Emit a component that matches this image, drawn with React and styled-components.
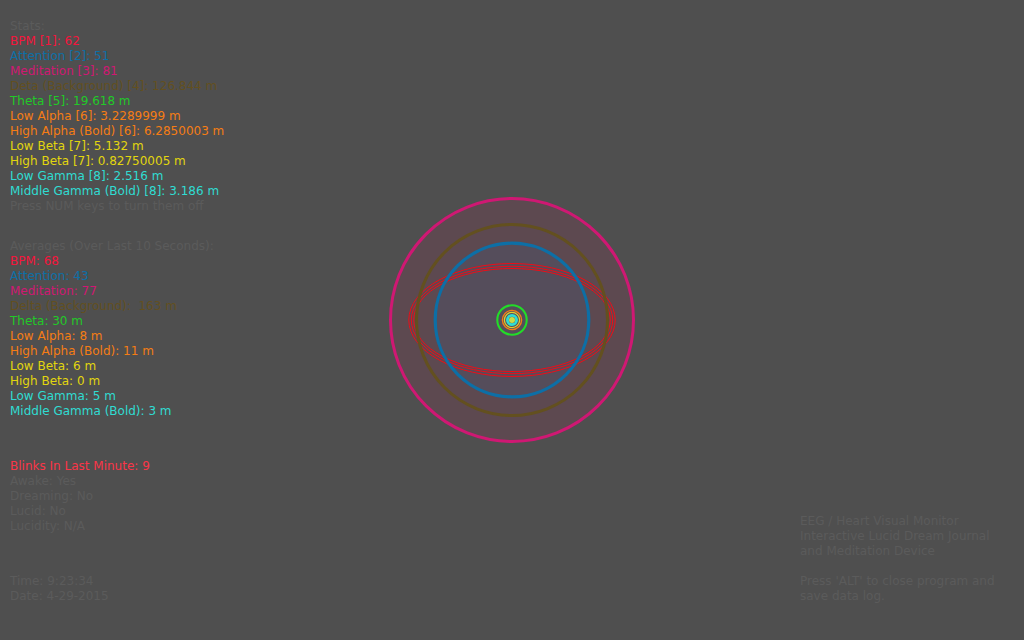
import React from "react";
import styled, { createGlobalStyle } from "styled-components";

const GlobalStyle = createGlobalStyle`
  body {
    margin: 0;
    background: #4f4f4f;
    font-family: "DejaVu Sans", Verdana, sans-serif;
    font-size: 12px;
    line-height: 15px;
  }
`;

const colors = {
  muted: "#5b5b5b",
  bpm: "#f4153c",
  attention: "#0d6fa6",
  meditation: "#cf1873",
  delta: "#63501f",
  theta: "#22c928",
  alpha: "#f57d14",
  beta: "#e2d60e",
  gamma: "#2fdcd2",
  blinks: "#fb3548",
};

const Screen = styled.main`
  display: grid;
  grid-template-columns: minmax(0, 1fr) 246px minmax(0, 1fr);
  min-height: 100vh;
  box-sizing: border-box;
  padding: 19px 10px 36px;
`;

const Readings = styled.div`
  display: flex;
  flex-direction: column;
`;

const Group = styled.section`
  margin-bottom: ${(p) => p.$gap || 0}px;
`;

const Line = styled.p`
  margin: 0;
  white-space: pre;
  color: ${(p) => colors[p.$tone || "muted"]};
`;

const Heading = styled.h2`
  margin: 0;
  font-size: inherit;
  font-weight: normal;
  color: ${colors.muted};
`;

const Rings = styled.svg`
  align-self: center;
  width: 100%;
  height: auto;
  margin-top: 17px;
`;

const About = styled.footer`
  align-self: end;
  justify-self: end;
  width: 214px;
  display: grid;
  gap: 15px;
  color: ${colors.muted};
`;

const Paragraph = styled.p`
  margin: 0;
  white-space: pre;
`;

const stats = [
  ["bpm", "BPM [1]: 62"],
  ["attention", "Attention [2]: 51"],
  ["meditation", "Meditation [3]: 81"],
  ["delta", "Deta (Background) [4]: 126.844 m"],
  ["theta", "Theta [5]: 19.618 m"],
  ["alpha", "Low Alpha [6]: 3.2289999 m"],
  ["alpha", "High Alpha (Bold) [6]: 6.2850003 m"],
  ["beta", "Low Beta [7]: 5.132 m"],
  ["beta", "High Beta [7]: 0.82750005 m"],
  ["gamma", "Low Gamma [8]: 2.516 m"],
  ["gamma", "Middle Gamma (Bold) [8]: 3.186 m"],
  ["muted", "Press NUM keys to turn them off"],
];

const averages = [
  ["bpm", "BPM: 68"],
  ["attention", "Attention: 43"],
  ["meditation", "Meditation: 77"],
  ["delta", "Delta (Background):  163 m"],
  ["theta", "Theta: 30 m"],
  ["alpha", "Low Alpha: 8 m"],
  ["alpha", "High Alpha (Bold): 11 m"],
  ["beta", "Low Beta: 6 m"],
  ["beta", "High Beta: 0 m"],
  ["gamma", "Low Gamma: 5 m"],
  ["gamma", "Middle Gamma (Bold): 3 m"],
];

const sleep = [
  ["blinks", "Blinks In Last Minute: 9"],
  ["muted", "Awake: Yes"],
  ["muted", "Dreaming: No"],
  ["muted", "Lucid: No"],
  ["muted", "Lucidity: N/A"],
];

const clock = [
  ["muted", "Time: 9:23:34"],
  ["muted", "Date: 4-29-2015"],
];

function Lines({ title, items, gap }) {
  return (
    <Group $gap={gap}>
      {title && <Heading>{title}</Heading>}
      {items.map(([tone, text]) => (
        <Line key={text} $tone={tone}>{text}</Line>
      ))}
    </Group>
  );
}

function Visualizer() {
  return (
    <Rings viewBox="-123 -123 246 246" fill="none" role="img" aria-label="Heart and brain wave rings">
      <circle r="121.5" fill="#5d4950" stroke="#cf1873" strokeWidth="3" />
      <circle r="77" fill="#554d5b" />
      <g stroke="#f00c16" strokeWidth="1">
        <ellipse rx="103.2" ry="56.5" />
        <ellipse rx="100.7" ry="53.7" />
        <ellipse rx="98.3" ry="51.5" />
      </g>
      <circle r="95.5" stroke="#63501f" strokeWidth="3" />
      <circle r="76.8" stroke="#0d6fa6" strokeWidth="3.2" />
      <circle r="14.7" stroke="#22dc28" strokeWidth="2.1" />
      <circle r="9.6" stroke="#f57d14" strokeWidth="1.4" />
      <circle r="7.6" stroke="#dcd030" strokeWidth="1.3" />
      <circle r="4.6" stroke="#2fdcd2" strokeWidth="2.8" />
      <circle r="3" fill="#c8dc48" />
    </Rings>
  );
}

export default function App() {
  return (
    <>
      <GlobalStyle />
      <Screen>
        <Readings>
          <Lines title="Stats:" items={stats} gap={25} />
          <Lines title="Averages (Over Last 10 Seconds):" items={averages} gap={40} />
          <Lines items={sleep} gap={40} />
          <Lines items={clock} />
        </Readings>
        <Visualizer />
        <About>
          <Paragraph>{"EEG / Heart Visual Monitor\nInteractive Lucid Dream Journal\nand Meditation Device"}</Paragraph>
          <Paragraph>{"Press 'ALT' to close program and\nsave data log."}</Paragraph>
        </About>
      </Screen>
    </>
  );
}
